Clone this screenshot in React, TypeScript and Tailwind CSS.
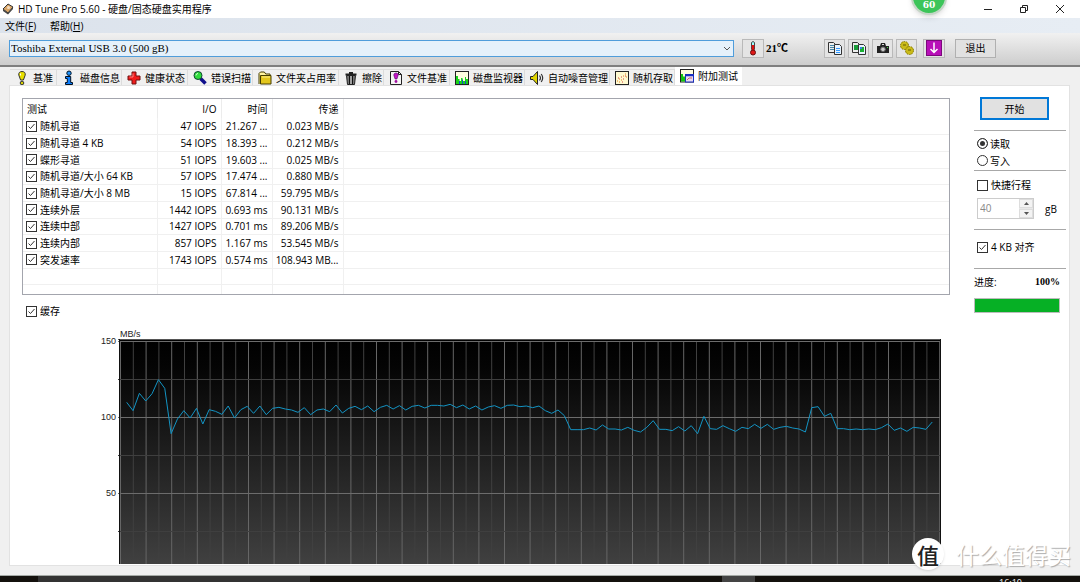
import { useState, type ReactNode } from "react";

const rows = [
    { name: "随机寻道", io: "47 IOPS", time: "21.267 ...", rate: "0.023 MB/s" },
    { name: "随机寻道 4 KB", io: "54 IOPS", time: "18.393 ...", rate: "0.212 MB/s" },
    { name: "蝶形寻道", io: "51 IOPS", time: "19.603 ...", rate: "0.025 MB/s" },
    { name: "随机寻道/大小 64 KB", io: "57 IOPS", time: "17.474 ...", rate: "0.880 MB/s" },
    { name: "随机寻道/大小 8 MB", io: "15 IOPS", time: "67.814 ...", rate: "59.795 MB/s" },
    { name: "连续外层", io: "1442 IOPS", time: "0.693 ms", rate: "90.131 MB/s" },
    { name: "连续中部", io: "1427 IOPS", time: "0.701 ms", rate: "89.206 MB/s" },
    { name: "连续内部", io: "857 IOPS", time: "1.167 ms", rate: "53.545 MB/s" },
    { name: "突发速率", io: "1743 IOPS", time: "0.574 ms", rate: "108.943 MB..." },
];

// Transfer samples, in thirds of a plot unit measured downwards
const samples = [
    232, 257, 205, 228, 206, 164, 190, 326, 282, 257, 279, 250, 297, 254, 259, 268, 243, 279, 254, 244, 265,
    243, 269, 250, 247, 252, 255, 262, 248, 269, 255, 252, 260, 240, 264, 250, 244, 254, 243, 260, 247, 241,
    252, 242, 255, 244, 241, 249, 241, 241, 243, 238, 248, 240, 252, 243, 255, 246, 242, 250, 241, 240, 245,
    243, 248, 243, 257, 265, 255, 272, 314, 314, 314, 309, 315, 300, 312, 312, 315, 307, 316, 321, 307, 287,
    313, 313, 317, 305, 318, 302, 326, 274, 311, 313, 302, 311, 319, 307, 311, 298, 310, 298, 313, 307, 304,
    309, 312, 321, 248, 245, 274, 265, 311, 311, 314, 312, 314, 312, 314, 308, 297, 316, 309, 319, 307, 309,
    313, 291,
];

const Icon = ({ children }: { children: ReactNode }) => (
    <svg viewBox="0 0 16 16" className="w-4 h-4 shrink-0" aria-hidden="true">
        {children}
    </svg>
);

const tabs = [
    {
        label: "基准",
        width: "w-[47px]",
        icon: (
            <Icon>
                <path d="M8 1.5c2.4 0 3.6 1.5 3.2 3.6L9.4 10H6.6L4.8 5.1C4.4 3 5.600 1.500 8 1.500z" fill="#e8e000" stroke="#333" />
                <path d="M6.500 3.500v2" stroke="#fff" />
                <circle cx="8" cy="13" r="1.800" fill="#d8d000" stroke="#333" />
            </Icon>
        ),
    },
    {
        label: "磁盘信息",
        width: "w-[65px]",
        icon: (
            <Icon>
                <circle cx="8" cy="3.200" r="2.200" fill="#2196ff" stroke="#012" />
                <path d="M4.500 6.500h5.200v6h1.800v2h-7v-2H6.300v-4H4.500z" fill="#0d7fff" stroke="#012" />
            </Icon>
        ),
    },
    {
        label: "健康状态",
        width: "w-[66px]",
        icon: (
            <Icon>
                <path d="M6 2h4v4h4v4h-4v4H6v-4H2V6h4z" fill="#f01c1c" stroke="#701010" />
                <path d="M7 3.500v3.500H3.500" stroke="#ff8080" fill="none" />
            </Icon>
        ),
    },
    {
        label: "错误扫描",
        width: "w-[65px]",
        icon: (
            <Icon>
                <path d="M8.500 8.500l5 5" stroke="#10108c" strokeWidth="3.500" />
                <circle cx="6" cy="5.500" r="4" fill="#2fdc3c" stroke="#143" />
                <path d="M4 5.500a2 2 0 0 1 2-2" stroke="#cfffd0" fill="none" />
            </Icon>
        ),
    },
    {
        label: "文件夹占用率",
        width: "w-[86px]",
        icon: (
            <Icon>
                <path d="M2 14V3.500L3.500 2h3.800l1.500 2H13v2.500" fill="#fff3a0" stroke="#443c00" />
                <path d="M3.500 14V5.500H14V14z" fill="#e3c61c" stroke="#443c00" />
                <path d="M5 7h8" stroke="#fff08a" />
            </Icon>
        ),
    },
    {
        label: "擦除",
        width: "w-[45px]",
        icon: (
            <Icon>
                <path d="M2.500 4.500h11M6 3h4" stroke="#222" strokeWidth="2" />
                <path d="M3.500 5.500h9l-1 9h-7z" fill="#777" stroke="#222" />
                <path d="M6.500 6v8M9.500 6v8" stroke="#111" />
                <path d="M8 6v8" stroke="#ccc" />
            </Icon>
        ),
    },
    {
        label: "文件基准",
        width: "w-[66px]",
        icon: (
            <Icon>
                <path d="M2.500 1.500h8l3 3v10h-11z" fill="#f5f5f5" stroke="#222" />
                <path d="M10.500 1.500v3h3" stroke="#222" fill="none" />
                <path d="M8 3c1.500 0 2.400 1 2.100 2.400L8.900 9H7.100L5.900 5.400C5.600 4 6.500 3 8 3z" fill="#c516c5" stroke="#406" strokeWidth=".6" />
                <circle cx="8" cy="11.500" r="1.400" fill="#a010a0" />
            </Icon>
        ),
    },
    {
        label: "磁盘监视器",
        width: "w-[75px]",
        icon: (
            <Icon>
                <rect x="1.500" y="1.500" width="13" height="13" fill="#fffde0" stroke="#222" />
                <path d="M2 14V6h2v3h1.500v2H7V8h1.500v3H11V7h1v2h2v5z" fill="#18d418" />
                <path d="M5.500 14v-3M8.500 14V9.500M11.500 14v-3" stroke="#1650c8" />
            </Icon>
        ),
    },
    {
        label: "自动噪音管理",
        width: "w-[85px]",
        icon: (
            <Icon>
                <path d="M1.500 6.500H4l4.500-5v13L4 9.500H1.500z" fill="#e0d400" stroke="#222" />
                <path d="M10.500 5.500q2 2.500 0 5M12.200 4q3 4 0 8" stroke="#333" strokeWidth="1.200" fill="none" />
            </Icon>
        ),
    },
    {
        label: "随机存取",
        width: "w-[65px]",
        icon: (
            <Icon>
                <rect x="1.500" y="1.500" width="13" height="13" fill="#fff9d0" stroke="#222" />
                <path d="M3 11h1M5 9h1M7 10h1M9 6h1M11 4h1M12 7h1M5 12h1" stroke="#e08020" />
                <path d="M4 8h1M7 7h1M9 9h1M11 6h1M8 12h1" stroke="#d04040" />
            </Icon>
        ),
    },
    {
        label: "附加测试",
        width: "w-[67px]",
        icon: (
            <Icon>
                <rect x="1.500" y="1.500" width="13" height="12.500" fill="#fffde0" stroke="#222" />
                <path d="M2 13.500V6h2v2.500h2v5z" fill="#12c412" />
                <rect x="6.500" y="6.500" width="8" height="7.500" fill="#e8dcf0" stroke="#1a2fc0" />
                <path d="M7 7.500h7" stroke="#1a2fc0" strokeWidth="1.500" />
                <path d="M8 12l2-2h3" stroke="#c66" fill="none" />
            </Icon>
        ),
    },
];

const tools = [
    {
        label: "复制文本",
        icon: (
            <Icon>
                <path d="M1.500 2.500h5l2 2v8h-7z" fill="#eee" stroke="#333" />
                <path d="M3 5.500h4M3 7.500h4M3 9.500h4" stroke="#48a" />
                <path d="M7.500 4.500h5l2 2v8h-7z" fill="#e8f4ff" stroke="#333" />
                <path d="M9 8.500h4M9 10.500h4M9 12.500h4" stroke="#39f" />
            </Icon>
        ),
    },
    {
        label: "复制图像",
        icon: (
            <Icon>
                <path d="M1.500 2.500h5l2 2v8h-7z" fill="#eee" stroke="#333" />
                <path d="M3 5h4v5H3z" fill="#1a9c3a" />
                <path d="M7.500 4.500h5l2 2v8h-7z" fill="#e8f4ff" stroke="#333" />
                <path d="M9 7h4v5H9z" fill="#18b030" />
                <path d="M9 7h2v2H9z" fill="#3a7de0" />
            </Icon>
        ),
    },
    {
        label: "屏幕截图",
        icon: (
            <Icon>
                <path d="M2 6h3l1-3h4l1 3h3v7H2z" fill="#222" />
                <path d="M7 4.500h2" stroke="#ddd" />
                <circle cx="8" cy="9.300" r="2.300" fill="#ccc" stroke="#666" />
                <path d="M12 7.500h1" stroke="#4d4" />
            </Icon>
        ),
    },
    {
        label: "选项",
        icon: (
            <Icon>
                <circle cx="5.500" cy="5.500" r="4" fill="#c9ba18" stroke="#7d7200" strokeDasharray="1.500 1" />
                <circle cx="10.500" cy="10.500" r="4" fill="#c9ba18" stroke="#7d7200" strokeDasharray="1.500 1" />
                <path d="M4 5h3M9 10h3" stroke="#665d00" />
            </Icon>
        ),
    },
];

const CheckBox = ({ label, checked = true }: { label: string; checked?: boolean }) => (
    <label className="flex items-center gap-[3px] whitespace-nowrap">
        <span className="grid place-items-center">
            <input
                type="checkbox"
                defaultChecked={checked}
                className="peer [grid-area:1/1] appearance-none w-[11px] h-[11px] border border-[#333] bg-white"
            />
            <svg viewBox="0 0 11 11" className="[grid-area:1/1] w-[11px] h-[11px] pointer-events-none hidden peer-checked:block" aria-hidden="true">
                <path d="M2.500 5.500l2 2 4-4.500" fill="none" stroke="#333" />
            </svg>
        </span>
        {label}
    </label>
);

const Radio = ({ label, checked = false }: { label: string; checked?: boolean }) => (
    <label className="flex items-center gap-[2px] h-[17px]">
        <input
            type="radio"
            name="mode"
            defaultChecked={checked}
            className="appearance-none w-[11px] h-[11px] rounded-full border border-[#333] bg-white checked:bg-[#333] checked:shadow-[inset_0_0_0_2px_white]"
        />
        {label}
    </label>
);

const TitleBar = () => (
    <header className="flex items-center justify-between h-[18px] bg-white pl-[2px] pr-[15px]">
        <div className="flex items-center gap-1">
            <svg viewBox="0 0 12 12" className="w-3 h-3" aria-hidden="true">
                <path d="M1 6l5-5 5 3-5 6z" fill="#d9a566" stroke="#333" />
                <path d="M1 6l5 4v1.500L1 8zM6 10l5-6v2l-5 5.500z" fill="#444" />
                <circle cx="6.500" cy="4.500" r="1.500" fill="#f3dcc0" />
            </svg>
            <h1>HD Tune Pro 5.60 - 硬盘/固态硬盘实用程序</h1>
        </div>
        <div className="flex gap-[26px]">
            <button aria-label="最小化">
                <svg viewBox="0 0 10 10" className="w-[10px] h-[10px]"><path d="M1 5.500h8" stroke="#222" /></svg>
            </button>
            <button aria-label="还原">
                <svg viewBox="0 0 10 10" className="w-[10px] h-[10px]">
                    <path d="M1.500 3.500h5v5h-5zM3.500 3V1.500h5v5H7" fill="none" stroke="#222" />
                </svg>
            </button>
            <button aria-label="关闭">
                <svg viewBox="0 0 10 10" className="w-[10px] h-[10px]"><path d="M1 1l8 8M9 1L1 9" stroke="#222" /></svg>
            </button>
        </div>
    </header>
);

const Toolbar = () => (
    <div className="flex items-center h-[34px] pl-[9px] pr-[84px] pb-[2px] border-b-2 border-[#7f7f7f] bg-linear-to-b from-[#f1f1f1] to-[#cdcdcd]">
        <div className="relative flex-1">
            <select
                aria-label="驱动器"
                className="block w-full h-[17px] pl-px appearance-none border border-[#4f9ddb] bg-[#e5f1fb] font-['Liberation_Serif',serif] text-[11px] leading-[14px]"
            >
                <option>Toshiba External USB 3.0 (500 gB)</option>
            </select>
            <svg viewBox="0 0 8 6" className="absolute right-[3px] top-[6px] w-2 h-[6px] pointer-events-none" aria-hidden="true">
                <path d="M1 1l3 3 3-3" fill="none" stroke="#555" />
            </svg>
        </div>
        <button aria-label="温度" className="ml-2 w-[22px] h-[19px] grid place-items-center border border-[#b9b9b9] bg-[#e4e4e4]">
            <Icon>
                <path d="M6.500 2.500q1.500-2 3 0v7h-3z" fill="#9ff" stroke="#444" />
                <path d="M8 5v7" stroke="#e01010" strokeWidth="2.400" />
                <circle cx="8" cy="12.500" r="2.500" fill="#e01818" stroke="#611" />
            </Icon>
        </button>
        <span className="ml-[2px] w-[58px] font-['Liberation_Serif','Noto_Sans_CJK_SC',serif] font-bold text-[11px]">21℃</span>
        <div className="flex gap-[3px]">
            {tools.map((tool) => (
                <button key={tool.label} aria-label={tool.label} className="w-[21px] h-[19px] grid place-items-center border border-[#b9b9b9] bg-[#e4e4e4]">
                    {tool.icon}
                </button>
            ))}
        </div>
        <button aria-label="保存" className="ml-[6px] w-[22px] h-[19px] grid place-items-center border border-[#b9b9b9] bg-[#e4e4e4]">
            <Icon>
                <rect x=".5" y=".5" width="15" height="15" fill="#b80fb8" stroke="#7c087c" />
                <path d="M8 2.500v10M4.500 9L8 12.500 11.500 9" fill="none" stroke="#fff" strokeWidth="1.500" />
            </Icon>
        </button>
        <button className="ml-[10px] w-[41px] h-[19px] border border-[#b0b0b0] bg-[#e1e1e1]">退出</button>
    </div>
);

const ResultTable = () => (
    <div className="h-[197px] overflow-hidden border border-[#a3a5ad]">
        <table className="w-full h-[203px] table-fixed border-collapse">
            <colgroup>
                <col className="w-[134px]" />
                <col className="w-[64px]" />
                <col className="w-[51px]" />
                <col className="w-[71px]" />
                <col />
            </colgroup>
            <thead>
                <tr className="h-[19px]">
                    <th className="border-r border-[#ececec] pl-1 text-left font-normal">测试</th>
                    <th className="border-r border-[#ececec] pr-1 text-right font-normal">I/O</th>
                    <th className="border-r border-[#ececec] pr-1 text-right font-normal">时间</th>
                    <th className="border-r border-[#ececec] pr-1 text-right font-normal">传递</th>
                    <th />
                </tr>
            </thead>
            <tbody>
                {rows.map((row) => (
                    <tr key={row.name} className="h-[16px] border-b border-[#f0f0f0]">
                        <td className="border-r border-[#f0f0f0] pl-[3px]"><CheckBox label={row.name} /></td>
                        <td className="border-r border-[#f0f0f0] pr-1 text-right">{row.io}</td>
                        <td className="border-r border-[#f0f0f0] pr-1 text-right whitespace-nowrap">{row.time}</td>
                        <td className="border-r border-[#f0f0f0] pr-1 text-right whitespace-nowrap">{row.rate}</td>
                        <td />
                    </tr>
                ))}
                {[0, 1].map((n) => (
                    <tr key={n} className="h-[16px] border-b border-[#f0f0f0]">
                        <td className="border-r border-[#f0f0f0]" />
                        <td className="border-r border-[#f0f0f0]" />
                        <td className="border-r border-[#f0f0f0]" />
                        <td className="border-r border-[#f0f0f0]" />
                        <td />
                    </tr>
                ))}
            </tbody>
        </table>
    </div>
);

const Chart = () => {
    const points = samples.map((s, i) => `${8.7 + i * 6.343},${s / 3 - 14}`).join(" ");
    return (
        <div className="flex pr-[9px] font-['Liberation_Sans',sans-serif] text-[9px] leading-[10px] text-[#222]">
            <div className="w-24 shrink-0 pt-[7px] pr-[2px] text-right">
                <div className="h-[76px]">150</div>
                <div className="h-[76px]">100</div>
                <div>50</div>
            </div>
            <div className="flex-1">
                <div className="h-[10px] pl-[2px]">MB/s</div>
                <svg viewBox="0 0 823 225" preserveAspectRatio="none" className="block w-full h-[225px]" role="img" aria-label="MB/s">
                    <defs>
                        <linearGradient id="plot" x1="0" y1="0" x2="0" y2="1">
                            <stop offset="0" stopColor="#000" />
                            <stop offset=".12" stopColor="#040404" />
                            <stop offset="1" stopColor="#404040" />
                        </linearGradient>
                    </defs>
                    <rect x="1" width="822" height="225" fill="url(#plot)" />
                    {Array.from({ length: 65 }, (_, k) => (
                        <path key={k} d={`M${2.5 + k * 12.8} 2V225`} stroke={k % 2 ? "#404040" : "#666"} />
                    ))}
                    {[40, 116, 192].map((y) => (
                        <path key={y} d={`M0 ${y}.5H823`} stroke="#3f3f3f" />
                    ))}
                    {[2, 78, 154].map((y) => (
                        <path key={y} d={`M0 ${y}.5H823`} stroke="#6c6c6c" />
                    ))}
                    <path d="M0 .5H823" stroke="#555" />
                    <path d="M1.500 0V225M822.500 0V225" stroke="#111" />
                    <polyline points={points} fill="none" stroke="#1394c4" />
                </svg>
            </div>
        </div>
    );
};

const SidePanel = () => {
    const [length, setLength] = useState(40);
    return (
        <aside className="w-[92px] shrink-0 flex flex-col">
            <button className="self-start ml-[6px] w-[69px] h-[23px] border-2 border-[#0078d7] bg-[#e1e1e1]">开始</button>
            <hr className="mt-[10px] border-[#a8a8a8]" />
            <div className="pl-[3px] pt-1 h-[39px]">
                <Radio label="读取" checked />
                <Radio label="写入" />
            </div>
            <hr className="border-[#a8a8a8]" />
            <div className="pl-[3px] pt-[7px] h-[58px]">
                <CheckBox label="快捷行程" checked={false} />
                <div className="flex items-center mt-[6px]">
                    <div className="flex w-[57px] h-[21px] border border-[#ccc] bg-white">
                        <input
                            type="text"
                            aria-label="快捷行程 gB"
                            value={length}
                            onChange={(e) => setLength(Number(e.target.value) || 0)}
                            className="flex-1 min-w-0 pl-[2px] pb-[2px] text-[#888]"
                        />
                        <div className="w-[14px] flex flex-col gap-px bg-[#e8e8e8]">
                            <button aria-label="增加" onClick={() => setLength(length + 1)} className="flex-1 grid place-items-center border border-[#ddd] bg-[#f3f3f3]">
                                <svg viewBox="0 0 5 3" className="w-[5px] h-[3px]"><path d="M0 3l2.500-3L5 3z" fill="#555" /></svg>
                            </button>
                            <button aria-label="减少" onClick={() => setLength(length - 1)} className="flex-1 grid place-items-center border border-[#ddd] bg-[#f3f3f3]">
                                <svg viewBox="0 0 5 3" className="w-[5px] h-[3px]"><path d="M0 0l2.500 3L5 0z" fill="#555" /></svg>
                            </button>
                        </div>
                    </div>
                    <span className="ml-[11px]">gB</span>
                </div>
            </div>
            <hr className="border-[#a8a8a8]" />
            <div className="pl-[3px] pt-[10px] h-[38px]">
                <CheckBox label="4 KB 对齐" />
            </div>
            <hr className="border-[#a8a8a8]" />
            <div className="flex justify-between pt-[6px] pr-[6px]">
                <span>进度:</span>
                <span className="font-['Liberation_Serif',serif] font-bold">100%</span>
            </div>
            <div role="progressbar" aria-label="进度" aria-valuenow={100} className="mt-[9px] mr-[6px] h-[15px] border border-[#bcbcbc] bg-[#06b025]" />
        </aside>
    );
};

const App = () => {
    const [active, setActive] = useState("附加测试");
    return (
        <div className="relative h-screen overflow-hidden flex flex-col bg-[#f0f0f0] text-black text-[10px] leading-[14px] font-['Open_Sans','Noto_Sans_CJK_SC',sans-serif]">
            <TitleBar />
            <nav className="flex items-center gap-[14px] h-[15px] pl-[5px] bg-linear-to-r from-[#dce3ec] to-[#e7edf4]">
                <button>文件(<u>F</u>)</button>
                <button>帮助(<u>H</u>)</button>
            </nav>
            <Toolbar />

            <main className="flex-1 min-h-0 flex flex-col pl-[9px] pr-[10px] pb-[9px]">
                <div role="tablist" className="flex items-end h-[18px] pl-px">
                    {tabs.map((tab) => (
                        <button
                            key={tab.label}
                            role="tab"
                            aria-selected={tab.label === active}
                            onClick={() => setActive(tab.label)}
                            className={`${tab.width} flex items-center gap-[3px] pl-1 whitespace-nowrap ${
                                tab.label === active ? "h-[18px] bg-white" : "h-4 border-t border-r border-[#dcdcdc]"
                            }`}
                        >
                            {tab.icon}
                            {tab.label}
                        </button>
                    ))}
                </div>
                <div className="flex-1 min-h-0 overflow-hidden flex items-start gap-6 bg-white border border-[#e2e2e2] pl-3 pr-[3px] pt-[11px]">
                    <section className="flex-1 min-w-0 pt-px">
                        <ResultTable />
                        <div className="pl-1 pt-[9px] pb-[11px]">
                            <CheckBox label="缓存" />
                        </div>
                        <Chart />
                    </section>
                    <SidePanel />
                </div>
            </main>

            {/* Taskbar edge */}
            <footer className="flex h-[7px] shrink-0 overflow-hidden border-t border-[#a5aaa6] bg-[#14110d] text-white">
                <div className="ml-[38px] w-[272px] bg-[#333]" />
                <div className="ml-auto w-[33px] bg-[#444]" />
                <span className="ml-[244px] mr-[58px] pt-[2px] text-[9px] leading-[10px]">16:10</span>
            </footer>

            {/* Floating ball */}
            <div className="absolute right-[133px] -top-[21px] w-9 h-9 rounded-full border-2 border-[#c4d6c6] bg-[#3cc559] shadow-md flex items-end justify-center pb-[2px] text-white text-[9px] leading-[11px] font-bold font-['DejaVu_Serif',serif]">
                60
            </div>

            {/* Watermark */}
            <div className="absolute right-[9px] bottom-3 flex items-center gap-3 font-['Noto_Sans_CJK_SC',sans-serif]">
                <span className="w-8 h-8 rounded-full bg-white shadow grid place-items-center text-[22px] leading-8 font-medium text-[#222]">值</span>
                <span className="text-[23px] leading-8 text-white [text-shadow:1px_1px_1px_#aaa]">什么值得买</span>
            </div>
        </div>
    );
};

export default App;
